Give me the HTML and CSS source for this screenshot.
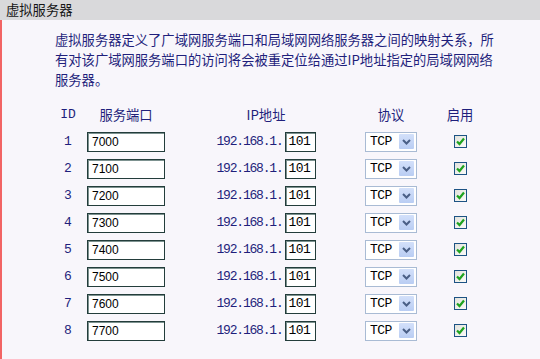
FILE: index.html
```html
<!DOCTYPE html>
<html lang="zh-CN">
<head>
    <meta charset="UTF-8">
    <title>虚拟服务器</title>
    <link rel="stylesheet" href="styles.css">
</head>
<body>

    <div class="title">虚拟服务器</div>

    <div class="main">
        <p class="intro">虚拟服务器定义了广域网服务端口和局域网网络服务器之间的映射关系，所有对该广域网服务端口的访问将会被重定位给通过IP地址指定的局域网网络服务器。</p>

        <div class="grid">
            <div class="head c-id">ID</div>
            <div class="head c-port">服务端口</div>
            <div class="head c-ip">IP地址</div>
            <div class="head c-proto">协议</div>
            <div class="head c-on">启用</div>

            <!-- row 1 -->
            <div class="c-id num">1</div>
            <div class="c-port"><span class="field port">7000</span></div>
            <div class="c-ip"><span class="ip">192.168.1.</span><span class="field host">101</span></div>
            <div class="c-proto"><span class="select"><span class="sel-text">TCP</span><span class="sel-btn"><svg width="9" height="6" viewBox="0 0 9 6"><path d="M1 1 L4.5 4.5 L8 1" fill="none" stroke="#4a5f86" stroke-width="2"/></svg></span></span></div>
            <div class="c-on"><span class="check"><svg width="11" height="11" viewBox="0 0 11 11"><path d="M2 5.5 L4.5 8 L9 2.5" fill="none" stroke="#1fa31f" stroke-width="2.2"/></svg></span></div>

            <!-- row 2 -->
            <div class="c-id num">2</div>
            <div class="c-port"><span class="field port">7100</span></div>
            <div class="c-ip"><span class="ip">192.168.1.</span><span class="field host">101</span></div>
            <div class="c-proto"><span class="select"><span class="sel-text">TCP</span><span class="sel-btn"><svg width="9" height="6" viewBox="0 0 9 6"><path d="M1 1 L4.5 4.5 L8 1" fill="none" stroke="#4a5f86" stroke-width="2"/></svg></span></span></div>
            <div class="c-on"><span class="check"><svg width="11" height="11" viewBox="0 0 11 11"><path d="M2 5.5 L4.5 8 L9 2.5" fill="none" stroke="#1fa31f" stroke-width="2.2"/></svg></span></div>

            <!-- row 3 -->
            <div class="c-id num">3</div>
            <div class="c-port"><span class="field port">7200</span></div>
            <div class="c-ip"><span class="ip">192.168.1.</span><span class="field host">101</span></div>
            <div class="c-proto"><span class="select"><span class="sel-text">TCP</span><span class="sel-btn"><svg width="9" height="6" viewBox="0 0 9 6"><path d="M1 1 L4.5 4.5 L8 1" fill="none" stroke="#4a5f86" stroke-width="2"/></svg></span></span></div>
            <div class="c-on"><span class="check"><svg width="11" height="11" viewBox="0 0 11 11"><path d="M2 5.5 L4.5 8 L9 2.5" fill="none" stroke="#1fa31f" stroke-width="2.2"/></svg></span></div>

            <!-- row 4 -->
            <div class="c-id num">4</div>
            <div class="c-port"><span class="field port">7300</span></div>
            <div class="c-ip"><span class="ip">192.168.1.</span><span class="field host">101</span></div>
            <div class="c-proto"><span class="select"><span class="sel-text">TCP</span><span class="sel-btn"><svg width="9" height="6" viewBox="0 0 9 6"><path d="M1 1 L4.5 4.5 L8 1" fill="none" stroke="#4a5f86" stroke-width="2"/></svg></span></span></div>
            <div class="c-on"><span class="check"><svg width="11" height="11" viewBox="0 0 11 11"><path d="M2 5.5 L4.5 8 L9 2.5" fill="none" stroke="#1fa31f" stroke-width="2.2"/></svg></span></div>

            <!-- row 5 -->
            <div class="c-id num">5</div>
            <div class="c-port"><span class="field port">7400</span></div>
            <div class="c-ip"><span class="ip">192.168.1.</span><span class="field host">101</span></div>
            <div class="c-proto"><span class="select"><span class="sel-text">TCP</span><span class="sel-btn"><svg width="9" height="6" viewBox="0 0 9 6"><path d="M1 1 L4.5 4.5 L8 1" fill="none" stroke="#4a5f86" stroke-width="2"/></svg></span></span></div>
            <div class="c-on"><span class="check"><svg width="11" height="11" viewBox="0 0 11 11"><path d="M2 5.5 L4.5 8 L9 2.5" fill="none" stroke="#1fa31f" stroke-width="2.2"/></svg></span></div>

            <!-- row 6 -->
            <div class="c-id num">6</div>
            <div class="c-port"><span class="field port">7500</span></div>
            <div class="c-ip"><span class="ip">192.168.1.</span><span class="field host">101</span></div>
            <div class="c-proto"><span class="select"><span class="sel-text">TCP</span><span class="sel-btn"><svg width="9" height="6" viewBox="0 0 9 6"><path d="M1 1 L4.5 4.5 L8 1" fill="none" stroke="#4a5f86" stroke-width="2"/></svg></span></span></div>
            <div class="c-on"><span class="check"><svg width="11" height="11" viewBox="0 0 11 11"><path d="M2 5.5 L4.5 8 L9 2.5" fill="none" stroke="#1fa31f" stroke-width="2.2"/></svg></span></div>

            <!-- row 7 -->
            <div class="c-id num">7</div>
            <div class="c-port"><span class="field port">7600</span></div>
            <div class="c-ip"><span class="ip">192.168.1.</span><span class="field host">101</span></div>
            <div class="c-proto"><span class="select"><span class="sel-text">TCP</span><span class="sel-btn"><svg width="9" height="6" viewBox="0 0 9 6"><path d="M1 1 L4.5 4.5 L8 1" fill="none" stroke="#4a5f86" stroke-width="2"/></svg></span></span></div>
            <div class="c-on"><span class="check"><svg width="11" height="11" viewBox="0 0 11 11"><path d="M2 5.5 L4.5 8 L9 2.5" fill="none" stroke="#1fa31f" stroke-width="2.2"/></svg></span></div>

            <!-- row 8 -->
            <div class="c-id num">8</div>
            <div class="c-port"><span class="field port">7700</span></div>
            <div class="c-ip"><span class="ip">192.168.1.</span><span class="field host">101</span></div>
            <div class="c-proto"><span class="select"><span class="sel-text">TCP</span><span class="sel-btn"><svg width="9" height="6" viewBox="0 0 9 6"><path d="M1 1 L4.5 4.5 L8 1" fill="none" stroke="#4a5f86" stroke-width="2"/></svg></span></span></div>
            <div class="c-on"><span class="check"><svg width="11" height="11" viewBox="0 0 11 11"><path d="M2 5.5 L4.5 8 L9 2.5" fill="none" stroke="#1fa31f" stroke-width="2.2"/></svg></span></div>
        </div>
    </div>

</body>
</html>
```

FILE: styles.css
```css
html, body {
    margin: 0;
    height: 100%;
}
body {
    font-family: "Noto Sans CJK SC", "Liberation Sans", sans-serif;
    font-size: 13.3px;
    background-color: #f8f6fb;
    color: #1f1f7c;
    overflow: hidden;
}
.title {
    height: 20px;
    line-height: 20px;
    padding-left: 6px;
    background-color: #d9d9db;
    color: #151515;
}
.main {
    box-sizing: border-box;
    height: calc(100% - 20px);
    border-left: 2px solid #f26464;
    padding: 10px 0 0 48px;
}
.intro {
    margin: 0;
    padding-left: 5px;
    width: 445px;
    line-height: 20px;
}
.grid {
    display: grid;
    grid-template-columns: 36px 80px 190px 70px 68px;
    grid-auto-rows: 27px;
    margin-top: 11px;
    align-items: center;
}
.grid > div {
    display: flex;
    justify-content: center;
    align-items: center;
}
.c-ip {
    padding-left: 10px;
}
.num, .head.c-id {
    font-family: "Liberation Mono", monospace;
    font-size: 13px;
}
.field {
    display: inline-block;
    box-sizing: border-box;
    height: 20px;
    line-height: 18px;
    border: 1px solid #233d3b;
    box-shadow: inset 1px 1px 0 #7d9290;
    background: #fff;
    color: #000;
}
.port {
    width: 78px;
    padding-left: 4px;
    font-family: "Liberation Sans", sans-serif;
    font-size: 12px;
}
.host {
    width: 31px;
    padding-left: 3px;
    font-family: "Liberation Mono", monospace;
    font-size: 13px;
    letter-spacing: -0.6px;
}
.ip {
    font-family: "Liberation Mono", monospace;
    font-size: 13px;
    letter-spacing: -1.2px;
    margin-right: 2px;
}
.select {
    display: inline-flex;
    align-items: center;
    justify-content: space-between;
    box-sizing: border-box;
    width: 52px;
    height: 20px;
    padding: 0 2px 0 4px;
    border: 1px solid #a9bbd4;
    background: #fff;
    color: #000;
}
.sel-text {
    font-family: "Liberation Mono", monospace;
    font-size: 13px;
    letter-spacing: -0.6px;
}
.sel-btn {
    display: flex;
    align-items: center;
    justify-content: center;
    width: 15px;
    height: 15px;
    background: linear-gradient(#d3e0fa, #b9cdf3);
    border-radius: 1px;
}
.check {
    display: flex;
    align-items: center;
    justify-content: center;
    box-sizing: border-box;
    width: 13px;
    height: 13px;
    border: 1px solid #1d5384;
    background: linear-gradient(135deg, #e2e2dc, #fbfbf8);
}
```
